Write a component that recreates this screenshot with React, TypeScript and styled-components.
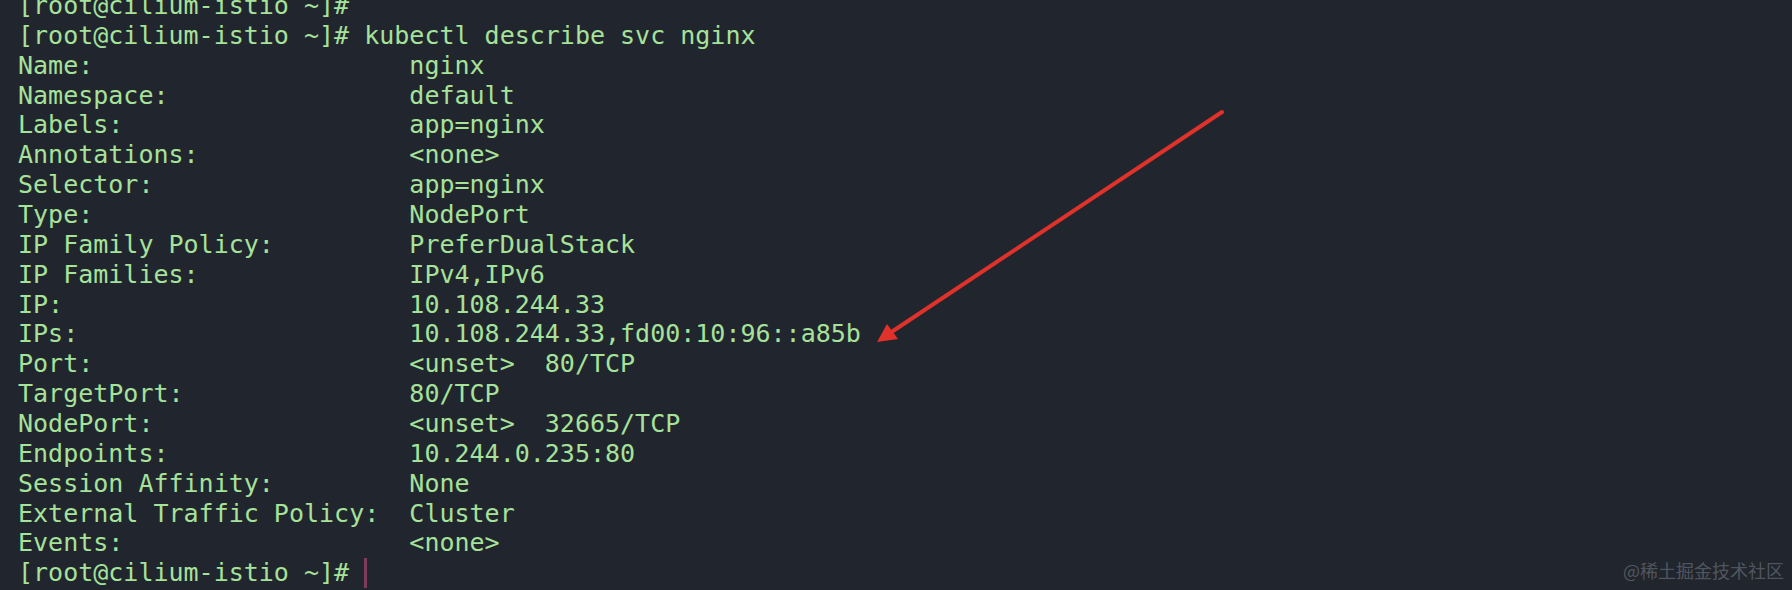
import React from "react";
import styled, { createGlobalStyle } from "styled-components";

const Global = createGlobalStyle`
  html, body { margin: 0; padding: 0; background: #21262e; }
  body { overflow: hidden; }
`;

const Screen = styled.div`
  position: relative;
  width: 1792px;
  height: 590px;
  overflow: hidden;
  background: #21262e;
`;

const Output = styled.div`
  margin-top: -9px;
  padding-left: 18px;
  font-family: "DejaVu Sans Mono", "Liberation Mono", monospace;
  font-size: 25px;
  line-height: 29.86px;
  color: #a6e29a;
  white-space: pre;
`;

const Line = styled.div`
  display: flex;
  height: 29.86px;
`;

const Key = styled.span`
  width: 26ch;
  flex: none;
`;

const Value = styled.span``;

const Cursor = styled.span`
  display: inline-block;
  width: 3px;
  height: 30px;
  margin-left: 15px;
  background: #7d3b5e;
  vertical-align: top;
`;

const Arrow = styled.svg`
  position: absolute;
  left: 0;
  top: 0;
  pointer-events: none;
`;

const Watermark = styled.div`
  position: absolute;
  right: 8px;
  bottom: 8px;
  font-family: "Noto Sans CJK SC", "Noto Sans", sans-serif;
  font-size: 18px;
  line-height: 24px;
  color: rgba(200, 205, 215, 0.3);
`;

const rows: [string, string][] = [
  ["Name:", "nginx"],
  ["Namespace:", "default"],
  ["Labels:", "app=nginx"],
  ["Annotations:", "<none>"],
  ["Selector:", "app=nginx"],
  ["Type:", "NodePort"],
  ["IP Family Policy:", "PreferDualStack"],
  ["IP Families:", "IPv4,IPv6"],
  ["IP:", "10.108.244.33"],
  ["IPs:", "10.108.244.33,fd00:10:96::a85b"],
  ["Port:", "<unset>  80/TCP"],
  ["TargetPort:", "80/TCP"],
  ["NodePort:", "<unset>  32665/TCP"],
  ["Endpoints:", "10.244.0.235:80"],
  ["Session Affinity:", "None"],
  ["External Traffic Policy:", "Cluster"],
  ["Events:", "<none>"],
];

export default function App() {
  return (
    <Screen>
      <Global />
      <Output>
        <Line>[root@cilium-istio ~]#</Line>
        <Line>[root@cilium-istio ~]# kubectl describe svc nginx</Line>
        {rows.map(([k, v]) => (
          <Line key={k}>
            <Key>{k}</Key>
            <Value>{v}</Value>
          </Line>
        ))}
        <Line>
          [root@cilium-istio ~]#
          <Cursor />
        </Line>
      </Output>
      <Arrow width="1792" height="590" viewBox="0 0 1792 590">
        <line x1="1222" y1="112" x2="890" y2="333" stroke="#e0322b" strokeWidth="4" strokeLinecap="round" />
        <polygon points="877,342 887,324 898,339" fill="#e0322b" />
      </Arrow>
      <Watermark>@稀土掘金技术社区</Watermark>
    </Screen>
  );
}
